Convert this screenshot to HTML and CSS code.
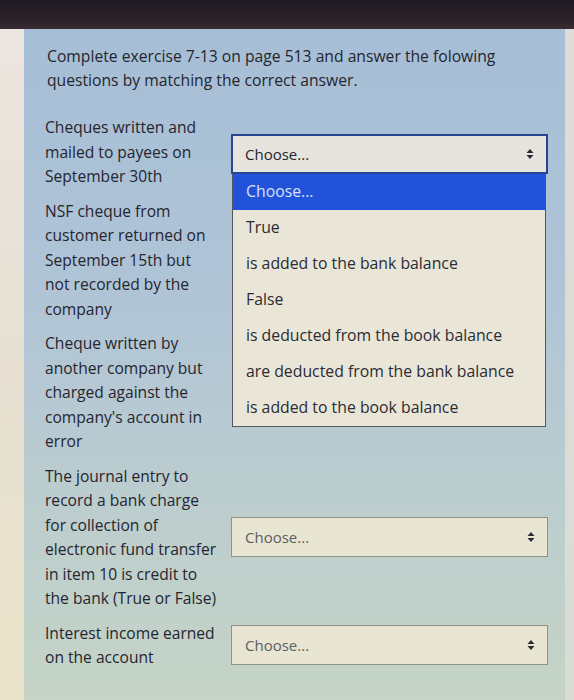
FILE: index.html
```html
<!DOCTYPE html>
<html lang="en">
<head>
<meta charset="utf-8">
<title>Matching question</title>
<link rel="stylesheet" href="styles.css">
</head>
<body>
<div class="topbar"></div>
<div class="screen">
  <div class="edge-left"></div>
  <main class="panel">
    <p class="prompt">Complete exercise 7-13 on page 513 and answer the folowing<br>questions by matching the correct answer.</p>
    <div class="rows">
      <div class="row">
        <div class="label">Cheques written and<br>mailed to payees on<br>September 30th</div>
        <div class="control">
          <div class="select focused">
            <span class="value">Choose...</span>
            <svg class="arrows" width="8" height="12" viewBox="0 0 8 12"><path d="M4 1 L7.5 5 H0.5 Z M4 11 L7.5 7 H0.5 Z" fill="#2a2a33"/></svg>
          </div>
          <ul class="menu">
            <li class="opt active">Choose...</li>
            <li class="opt">True</li>
            <li class="opt">is added to the bank balance</li>
            <li class="opt">False</li>
            <li class="opt">is deducted from the book balance</li>
            <li class="opt">are deducted from the bank balance</li>
            <li class="opt">is added to the book balance</li>
          </ul>
        </div>
      </div>
      <div class="row">
        <div class="label">NSF cheque from<br>customer returned on<br>September 15th but<br>not recorded by the<br>company</div>
        <div class="control"></div>
      </div>
      <div class="row">
        <div class="label">Cheque written by<br>another company but<br>charged against the<br>company's account in<br>error</div>
        <div class="control"></div>
      </div>
      <div class="row">
        <div class="label">The journal entry to<br>record a bank charge<br>for collection of<br>electronic fund transfer<br>in item 10 is credit to<br>the bank (True or False)</div>
        <div class="control">
          <div class="select">
            <span class="value muted">Choose...</span>
            <svg class="arrows" width="8" height="12" viewBox="0 0 8 12"><path d="M4 1 L7.5 5 H0.5 Z M4 11 L7.5 7 H0.5 Z" fill="#2a2a33"/></svg>
          </div>
        </div>
      </div>
      <div class="row">
        <div class="label">Interest income earned<br>on the account</div>
        <div class="control">
          <div class="select">
            <span class="value muted">Choose...</span>
            <svg class="arrows" width="8" height="12" viewBox="0 0 8 12"><path d="M4 1 L7.5 5 H0.5 Z M4 11 L7.5 7 H0.5 Z" fill="#2a2a33"/></svg>
          </div>
        </div>
      </div>
    </div>
  </main>
  <div class="edge-right"></div>
</div>
</body>
</html>
```
FILE: styles.css
```css
html, body {
  margin: 0;
  padding: 0;
  height: 700px;
  overflow: hidden;
  background: #e3ddd3;
  font-family: "Open Sans", "Noto Sans", "Liberation Sans", sans-serif;
  color: #25252e;
}

.topbar {
  height: 29px;
  background: linear-gradient(180deg, #1f1a22 0%, #2c2129 70%, #3a2c33 100%);
}

.screen {
  display: flex;
  height: 671px;
}

.edge-left {
  width: 24px;
  background: linear-gradient(180deg, #ece6e0 0%, #e6dfd2 50%, #e9e3c9 100%);
}

.edge-right {
  width: 9px;
  background: linear-gradient(180deg, #dedcd8 0%, #d9dcd4 100%);
}

.panel {
  flex: 1;
  background: linear-gradient(180deg, #a6bed6 0%, #b0c4d6 40%, #bccdcf 70%, #c5d4c6 100%);
  padding: 15px 17px 0 21px;
  box-sizing: border-box;
}

.prompt {
  margin: 0 0 23px 2px;
  font-size: 15.7px;
  line-height: 24px;
  white-space: nowrap;
}

.rows {
  display: flex;
  flex-direction: column;
  gap: 10px;
}

.row {
  display: grid;
  grid-template-columns: 177px 1fr;
  column-gap: 9px;
  align-items: center;
}

.label {
  font-size: 15.6px;
  line-height: 24.5px;
  white-space: nowrap;
}

.control {
  position: relative;
}

.select {
  height: 40px;
  box-sizing: border-box;
  border: 1px solid #8e9288;
  background: #e8e5d3;
  display: flex;
  align-items: center;
  justify-content: space-between;
  padding: 0 12px 0 13px;
  font-size: 15px;
}

.select.focused {
  border: 2px solid #27468f;
  background: #e6e4dc;
  padding-left: 12px;
  margin-top: 5px;
}

.value.muted {
  color: #5c5e62;
}

.menu {
  position: absolute;
  top: 45px;
  left: 1px;
  right: 2px;
  margin: 0;
  padding: 0;
  list-style: none;
  background: #e9e6d8;
  border: 1px solid #55585e;
  border-top: none;
  z-index: 2;
}

.opt {
  height: 36px;
  line-height: 34px;
  padding-left: 13px;
  font-size: 15.8px;
  color: #2b2b33;
}

.opt.active {
  background: #2152d9;
  color: #dbe2f7;
}
```
